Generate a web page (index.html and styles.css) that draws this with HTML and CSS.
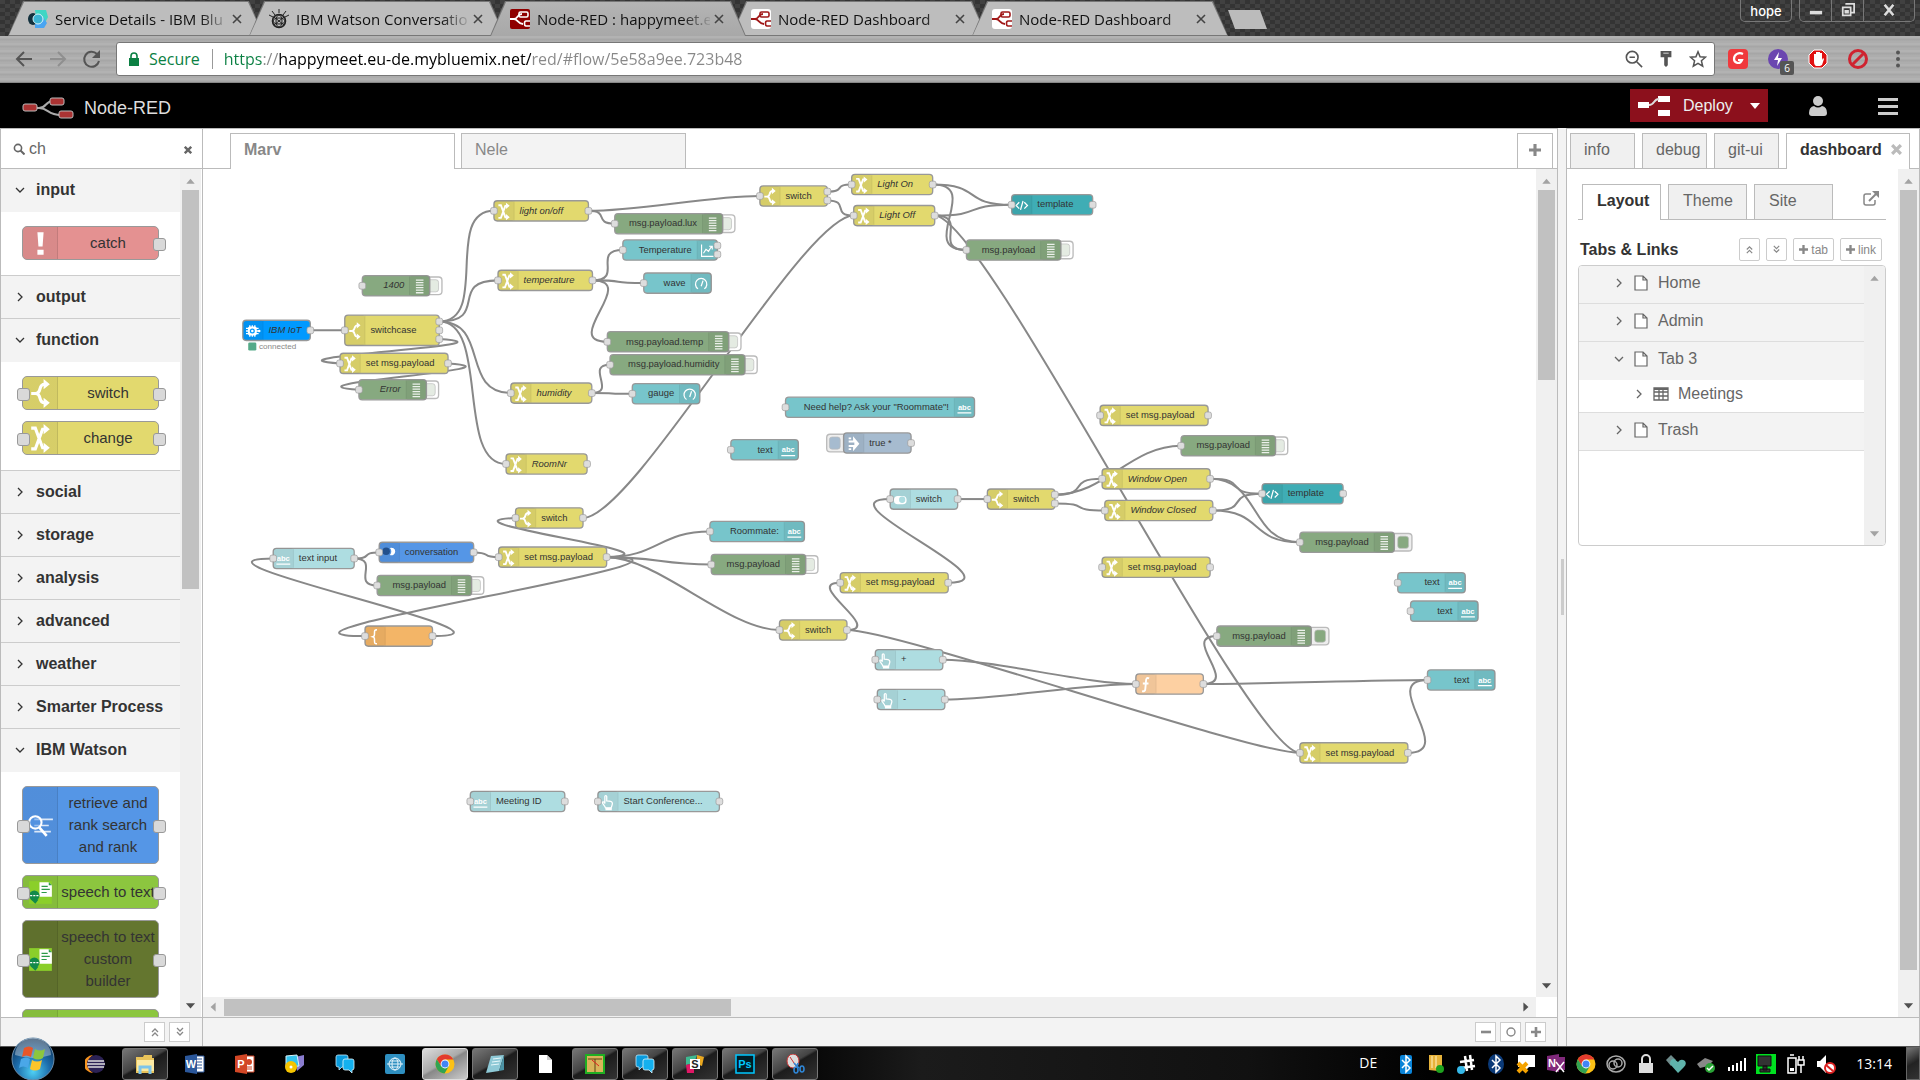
FILE: index.html
```html
<!DOCTYPE html>
<html lang="en">
  <head>
    <meta charset="UTF-8" />
    <meta name="viewport" content="width=device-width, initial-scale=1.0" />
    <title>Node-RED : happymeet.eu-de.mybluemix.net</title>
    <link rel="stylesheet" href="styles.css">
  </head>
  <body>
    <svg class="sprite" aria-hidden="true">
      <!-- node icons -->
      <symbol id="i-switch" viewBox="0 0 30 30">
        <g fill="none" stroke="#fff" stroke-width="3"><path d="M6 15h4c7 0 2-9 9-9M10 15c7 0 2 9 9 9" /></g>
        <path fill="#fff" d="M18 1l6 5-6 5zM18 19l6 5-6 5z" />
      </symbol>
      <symbol id="i-change" viewBox="0 0 30 30">
        <g fill="none" stroke="#fff" stroke-width="3"><path d="M6 5h4l7 19h3M6 25h4l7-19h3" /></g>
        <path fill="#fff" d="M18 1l6 5-6 5zM18 19l6 5-6 5z" />
      </symbol>
      <symbol id="i-debug" viewBox="0 0 30 30">
        <path stroke="#fff" stroke-width="2" opacity=".85" d="M9 5h12M9 9h12M9 13h12M9 17h12M9 21h12M9 25h12" />
      </symbol>
      <symbol id="i-catch" viewBox="0 0 30 30">
        <path fill="#fff" d="M12 4h6l-1 14h-4zM12 21h6v5h-6z" />
      </symbol>
      <symbol id="i-iot" viewBox="0 0 30 30">
        <path stroke="#fff" stroke-width="2" d="M10 6v18M14 6v18M18 6v18M4 11h20M4 15h22M4 19h20" />
        <rect x="7" y="8" width="14" height="14" rx="3" fill="#fff" />
        <circle cx="14" cy="15" r="3" fill="none" stroke="#09f" stroke-width="2" />
        <circle cx="25" cy="15" r="2" fill="#fff" />
      </symbol>
      <symbol id="i-abc" viewBox="0 0 30 30">
        <text x="15" y="18" class="abc">abc</text>
        <path stroke="#fff" stroke-width="2" d="M4 23h22" />
      </symbol>
      <symbol id="i-chart" viewBox="0 0 30 30">
        <path fill="none" stroke="#fff" stroke-width="1.8" d="M6 5v19h19M9 19l4-6 4 3 5-8M18 8h5v5" />
      </symbol>
      <symbol id="i-gauge" viewBox="0 0 30 30">
        <path fill="none" stroke="#fff" stroke-width="2" d="M10 23a9 9 0 1 1 10 0M15 19l3-9" />
      </symbol>
      <symbol id="i-code" viewBox="0 0 30 30">
        <path fill="none" stroke="#fff" stroke-width="2" d="M11 10l-5 5 5 5M19 10l5 5-5 5M17 8l-4 14" />
      </symbol>
      <symbol id="i-toggle" viewBox="0 0 30 30">
        <rect x="5" y="9" width="20" height="13" rx="6" fill="#fff" />
        <circle cx="18" cy="15" r="5" fill="#aedde1" />
      </symbol>
      <symbol id="i-hand" viewBox="0 0 30 30">
        <path fill="none" stroke="#fff" stroke-width="2" d="M11 24c-1-4-5-6-5-9 2-1 3 0 4 2V6c0-2 3-2 3 0v7c5 0 9 1 9 4 0 2-1 4-2 7z" />
        <path fill="#fff" d="M11 24h10v4H11z" />
      </symbol>
      <symbol id="i-inject" viewBox="0 0 30 30">
        <path fill="#fff" d="M14 3l10 12-10 12v-7H7v-3h9v-4H7v-3h7zM7 5h4v3H7zM7 22h4v3H7z" />
      </symbol>
      <symbol id="i-brace" viewBox="0 0 30 30">
        <path fill="none" stroke="#fff" stroke-width="2.4" d="M18 4c-4 0-4 1-4 5s0 5-3 6c3 1 3 2 3 6s0 5 4 5" />
      </symbol>
      <symbol id="i-function" viewBox="0 0 30 30">
        <path fill="none" stroke="#fff" stroke-width="3" d="M20 5c-4-2-5 1-5 5l-1 11c0 4-2 5-5 4M10 13h9" />
      </symbol>
      <symbol id="i-talk" viewBox="0 0 30 30">
        <circle cx="10" cy="12" r="6" fill="#22508d" /><path fill="#fff" d="M16 7a6 6 0 1 1 0 11 8 8 0 0 0 0-11z" />
      </symbol>
      <symbol id="i-search" viewBox="0 0 30 30">
        <path stroke="#fff" stroke-width="1.6" opacity=".8" d="M9 9h18M9 15h14M9 21h16" />
        <circle cx="10" cy="12" r="6" fill="#5596e6" fill-opacity=".5" stroke="#fff" stroke-width="2" />
        <path stroke="#fff" stroke-width="2.6" d="M14 17l7 8" />
      </symbol>
      <symbol id="i-speech" viewBox="0 0 30 30">
        <path fill="#8bcf2a" d="M4 4h22v22H4z" /><path fill="#fff" d="M14 5h9l3 3v11H14z" />
        <path fill="#2b9a48" d="M23 5v3h3z" />
        <path stroke="#2b9a48" stroke-width="1.2" d="M16 9h6M16 12h8M16 15h5" />
        <circle cx="9" cy="18" r="5" fill="#128a4a" /><path fill="#128a4a" d="M6 22h7l-3 4z" />
        <path stroke="#fff" stroke-width="1.4" stroke-dasharray="2 1" d="M5 18h8" />
      </symbol>

      <!-- general icons -->
      <symbol id="i-right" viewBox="0 0 10 10"><path fill="none" stroke="currentColor" stroke-width="1.3" d="M3 1l4 4-4 4" /></symbol>
      <symbol id="i-down" viewBox="0 0 10 10"><path fill="none" stroke="currentColor" stroke-width="1.3" d="M1 3l4 4 4-4" /></symbol>
      <symbol id="i-dup" viewBox="0 0 10 10"><path fill="none" stroke="currentColor" stroke-width="1.3" d="M2 5l3-3 3 3M2 9l3-3 3 3" /></symbol>
      <symbol id="i-ddown" viewBox="0 0 10 10"><path fill="none" stroke="currentColor" stroke-width="1.3" d="M2 1l3 3 3-3M2 5l3 3 3-3" /></symbol>
      <symbol id="i-cross" viewBox="0 0 10 10"><path stroke="currentColor" stroke-width="3" d="M1 1l8 8M9 1l-8 8" /></symbol>
      <symbol id="i-thin" viewBox="0 0 10 10"><path stroke="currentColor" stroke-width="1.6" d="M1 1l8 8M9 1l-8 8" /></symbol>
      <symbol id="i-plus" viewBox="0 0 10 10"><path stroke="currentColor" stroke-width="2.6" d="M5 0v10M0 5h10" /></symbol>
      <symbol id="i-minus" viewBox="0 0 10 10"><path stroke="currentColor" stroke-width="2.6" d="M0 5h10" /></symbol>
      <symbol id="i-ring" viewBox="0 0 10 10"><circle cx="5" cy="5" r="4" fill="none" stroke="currentColor" stroke-width="1.4" /></symbol>
      <symbol id="i-lens" viewBox="0 0 12 12"><circle cx="5" cy="5" r="3.6" fill="none" stroke="currentColor" stroke-width="1.6" /><path stroke="currentColor" stroke-width="2" d="M7.500 7.500l4 4" /></symbol>
      <symbol id="i-page" viewBox="0 0 14 16"><path fill="#fff" stroke="currentColor" stroke-width="1.2" d="M1 1h8l4 4v10H1zM9 1v4h4" /></symbol>
      <symbol id="i-table" viewBox="0 0 16 14"><path fill="none" stroke="currentColor" stroke-width="1.3" d="M1 1h14v12H1zM1 5h14M1 9h14M6 2v11M10 2v11" /><path fill="currentColor" d="M1 1h14v2H1z" /></symbol>
      <symbol id="i-red" viewBox="0 0 20 20">
        <path fill="none" stroke="currentColor" stroke-width="1.8" d="M0 10h4c4 0 3-5 8-5M4 10c4 0 4 5 9 5" />
        <rect x="9" y="3" width="9" height="5" rx="1.500" fill="none" stroke="currentColor" stroke-width="1.6" />
        <path fill="none" stroke="currentColor" stroke-width="1.6" d="M20 12h-4c-2 0-2 5 0 5h4" />
      </symbol>
      <symbol id="i-chrome" viewBox="0 0 20 20">
        <circle cx="10" cy="10" r="9.500" fill="#fbc116" />
        <path fill="#e33b2e" d="M1.800 5.200A9.500 9.500 0 0 1 18.300 5.500H10L6 12z" />
        <path fill="#31a352" d="M1.800 5.200A9.500 9.500 0 0 0 9.500 19.500L14 12l-8 0z" />
        <circle cx="10" cy="10" r="4.400" fill="#fff" /><circle cx="10" cy="10" r="3.500" fill="#4285f4" />
      </symbol>
      <symbol id="i-chat" viewBox="0 0 20 20">
        <path fill="#0a9bdc" stroke="#bfe9fb" stroke-width=".8" d="M1 3q0-2 2-2h8q2 0 2 2v8q0 2-2 2H7l-3 3v-3H3q-2 0-2-2z" />
        <path fill="#14b1ef" stroke="#dff5fd" stroke-width=".8" d="M8 7q0-2 2-2h7q2 0 2 2v7q0 2-2 2v3l-3-3h-4q-2 0-2-2z" />
      </symbol>
      <symbol id="i-bt" viewBox="0 0 20 20"><path fill="none" stroke="#fff" stroke-width="1.5" d="M6 6l8 8-4 4V2l4 4-8 8" /></symbol>
    </svg>

    <div class="tabstrip">
      <div class="btab">
        <svg class="fav" viewBox="0 0 20 20"><path fill="#3fd6c4" d="M7 1h11l2 7-3 6H9z" /><path fill="#4aa5f2" d="M7 19h9l3-5-4-6-8 3z" /><ellipse cx="5" cy="10" rx="5" ry="6" fill="#12303d" /><circle cx="10" cy="10" r="5" fill="#3bb3d2" stroke="#d8f6fa" /></svg>
        <span class="btitle">Service Details - IBM Blu</span>
        <button class="bclose" aria-label="Close tab"><svg><use href="#i-thin" /></svg></button>
      </div>
      <div class="btab">
        <svg class="fav" viewBox="0 0 20 20"><g fill="none" stroke="#222"><path d="M10 0v4M3 2l3 4M17 2l-3 4M0 6l4 2M20 6l-4 2" /><circle cx="10" cy="12" r="6.500" stroke-width="1.6" /><ellipse cx="10" cy="12" rx="6" ry="3" /><ellipse cx="10" cy="12" rx="3" ry="6" /><path d="M5 8l10 8M15 8L5 16" /></g></svg>
        <span class="btitle">IBM Watson Conversatio</span>
        <button class="bclose" aria-label="Close tab"><svg><use href="#i-thin" /></svg></button>
      </div>
      <div class="btab active">
        <svg class="fav solid"><use href="#i-red" /></svg>
        <span class="btitle">Node-RED : happymeet.e</span>
        <button class="bclose" aria-label="Close tab"><svg><use href="#i-thin" /></svg></button>
      </div>
      <div class="btab">
        <svg class="fav light"><use href="#i-red" /></svg>
        <span class="btitle">Node-RED Dashboard</span>
        <button class="bclose" aria-label="Close tab"><svg><use href="#i-thin" /></svg></button>
      </div>
      <div class="btab">
        <svg class="fav light"><use href="#i-red" /></svg>
        <span class="btitle">Node-RED Dashboard</span>
        <button class="bclose" aria-label="Close tab"><svg><use href="#i-thin" /></svg></button>
      </div>
      <button class="newtab" aria-label="New tab"></button>
      <div class="winbar">
        <button class="profile">hope</button>
        <div class="wincontrols">
          <button aria-label="Minimize"><svg viewBox="0 0 16 16"><path fill="#ddd" d="M1 9h14v4H1z" /></svg></button>
          <button aria-label="Restore"><svg viewBox="0 0 16 16"><path fill="none" stroke="#ddd" stroke-width="2" d="M5 1h10v10h-3M2 5h9v9H2zM5 9h3v2H5z" /></svg></button>
          <button class="wide" aria-label="Close"><svg viewBox="0 0 16 16"><path stroke="#ddd" stroke-width="3" d="M3 2l10 12M13 2L3 14" /></svg></button>
        </div>
      </div>
    </div>

    <div class="toolbar">
      <button aria-label="Back"><svg viewBox="0 0 20 20"><path fill="none" stroke="#555" stroke-width="2" d="M18 10H3M10 3l-7 7 7 7" /></svg></button>
      <button aria-label="Forward"><svg viewBox="0 0 20 20"><path fill="none" stroke="#8f8f8f" stroke-width="2" d="M2 10h15M10 3l7 7-7 7" /></svg></button>
      <button aria-label="Reload"><svg viewBox="0 0 20 20"><path fill="none" stroke="#555" stroke-width="2" d="M17 12a7.500 7.500 0 1 1-2-7l2 2" /><path fill="#555" d="M18 1v8h-8z" /></svg></button>
      <div class="omnibox">
        <svg class="lock" viewBox="0 0 10 14"><path fill="#0b8043" d="M0 6h10v8H0z" /><path fill="none" stroke="#0b8043" stroke-width="1.600" d="M2 6V4a3 3 0 0 1 6 0v2" /></svg>
        <span class="secure">Secure</span>
        <input class="url" type="text" aria-label="Address" value="https://happymeet.eu-de.mybluemix.net/red/#flow/5e58a9ee.723b48" />
        <svg class="oi" viewBox="0 0 20 20"><g fill="none" stroke="#555" stroke-width="1.800"><circle cx="8" cy="8" r="6.500" /><path d="M5 8h6M13 13l6 6" /></g></svg>
        <svg class="oi" viewBox="0 0 20 20"><path fill="#555" d="M4 1h12v7h-4v9l-2 2-2-2V8H4zM7 3v1h6V3z" /></svg>
        <svg class="oi" viewBox="0 0 20 20"><path fill="none" stroke="#555" stroke-width="1.700" d="M10 2l2.300 5.500 6 .5-4.500 4 1.400 6-5.200-3.200L4.800 18l1.400-6L1.700 8l6-.5z" /></svg>
      </div>
      <div class="exts">
        <button aria-label="Grammar"><svg viewBox="0 0 20 20"><rect width="20" height="20" rx="4" fill="#f0393d" /><path fill="none" stroke="#fff" stroke-width="2.200" d="M15 5c-4-2-9 0-9 5 0 4 6 6 8 1h-4" /></svg></button>
        <button aria-label="Speed"><svg viewBox="0 0 20 20"><circle cx="10" cy="10" r="10" fill="#6b46b0" /><path fill="#fff" d="M11 3l-5 8h4l-1 6 5-8h-4z" /></svg><span class="badge">6</span></button>
        <button aria-label="Ad blocker"><svg viewBox="0 0 20 20"><path fill="#e01010" stroke="#fff" d="M6 1h8l5 5v8l-5 5H6l-5-5V6z" /><path fill="#fff" d="M6 10V5h2v4-6h2v6-6h2v6-5h2v7l1-2 1 1-2 6-2 1H8c-2-1-2-3-2-6z" /></svg></button>
        <button aria-label="Blocked"><svg viewBox="0 0 20 20"><g fill="none" stroke="#cf2330" stroke-width="3"><circle cx="10" cy="10" r="8.500" /><path d="M16 4L4 16" /></g></svg></button>
        <button aria-label="Menu"><svg viewBox="0 0 20 20"><g fill="#555"><circle cx="10" cy="3.500" r="2" /><circle cx="10" cy="10" r="2" /><circle cx="10" cy="16.500" r="2" /></g></svg></button>
      </div>
    </div>

    <header class="header">
      <svg class="logo" viewBox="0 0 52 22"><g fill="none" stroke="#aaa" stroke-width="2"><path d="M14 11h3c8 0 6-7 14-7M17 11c10 0 8 7 22 7" /></g><g fill="#a33" stroke="#bbb"><rect x="1" y="7" width="14" height="7" rx="2" /><rect x="28" y="1" width="14" height="7" rx="2" /><rect x="37" y="14" width="14" height="7" rx="2" /></g></svg>
      <span class="brand">Node-RED</span>
      <button class="deploy">
        <svg class="deploy-icon" viewBox="0 0 32 20"><path fill="#fff" d="M0 6h11v6H0zM20 0h12v6H20zM20 14h12v6H20z" /><path fill="none" stroke="#ddd" stroke-width="2" d="M11 9c6 0 4-6 10-6" /></svg>
        <span>Deploy</span>
        <svg class="caret" viewBox="0 0 10 6"><path fill="#fff" d="M0 0h10L5 6z" /></svg>
      </button>
      <button class="hbtn" aria-label="User"><svg viewBox="0 0 18 20"><circle cx="9" cy="5" r="5" fill="#ccc" /><path fill="#ccc" d="M5 10q4 3 8 0 5 1 5 7 0 3-3 3H3q-3 0-3-3 0-6 5-7z" /></svg></button>
      <button class="hbtn" aria-label="Menu"><svg viewBox="0 0 20 20"><path fill="#ccc" d="M0 2h20v3H0zM0 9h20v3H0zM0 16h20v3H0z" /></svg></button>
    </header>

    <main class="editor">
      <aside class="palette">
        <div class="search">
          <svg><use href="#i-lens" /></svg>
          <input type="text" aria-label="filter nodes" value="ch" />
          <button aria-label="Clear"><svg><use href="#i-cross" /></svg></button>
        </div>
        <div class="palette-main">
          <div class="palette-list">
            <button class="cat open"><svg><use href="#i-down" /></svg>input</button>
            <div class="nodes">
              <div class="pnode catch out"><svg><use href="#i-catch" /></svg><span>catch</span></div>
            </div>
            <button class="cat"><svg><use href="#i-right" /></svg>output</button>
            <button class="cat open"><svg><use href="#i-down" /></svg>function</button>
            <div class="nodes">
              <div class="pnode yellow in out"><svg><use href="#i-switch" /></svg><span>switch</span></div>
              <div class="pnode yellow in out"><svg><use href="#i-change" /></svg><span>change</span></div>
            </div>
            <button class="cat"><svg><use href="#i-right" /></svg>social</button>
            <button class="cat"><svg><use href="#i-right" /></svg>storage</button>
            <button class="cat"><svg><use href="#i-right" /></svg>analysis</button>
            <button class="cat"><svg><use href="#i-right" /></svg>advanced</button>
            <button class="cat"><svg><use href="#i-right" /></svg>weather</button>
            <button class="cat"><svg><use href="#i-right" /></svg>Smarter Process</button>
            <button class="cat open"><svg><use href="#i-down" /></svg>IBM Watson</button>
            <div class="nodes">
              <div class="pnode blue in out"><svg><use href="#i-search" /></svg><span>retrieve and <br />rank search <br />and rank</span></div>
              <div class="pnode green in out"><svg><use href="#i-speech" /></svg><span>speech to text</span></div>
              <div class="pnode olive in out"><svg><use href="#i-speech" /></svg><span>speech to text <br />custom <br />builder</span></div>
              <div class="pnode green"></div>
            </div>
          </div>
          <div class="vscroll palette-scroll"><i class="up"></i><b></b><s></s><i class="dn dark"></i></div>
        </div>
        <div class="footer">
          <button aria-label="Collapse all"><svg><use href="#i-dup" /></svg></button>
          <button aria-label="Expand all"><svg><use href="#i-ddown" /></svg></button>
        </div>
      </aside>

      <section class="workspace">
        <nav class="wtabs">
          <a class="wtab active" href="#marv">Marv</a>
          <a class="wtab" href="#nele">Nele</a>
          <button class="add" aria-label="Add flow"><svg><use href="#i-plus" /></svg></button>
        </nav>
        <div class="chart">
          <div class="canvas"><svg id="flow"></svg></div>
          <div class="vscroll chart-scroll"><i class="up"></i><b></b><s></s><i class="dn dark"></i></div>
          <div class="hscroll"><i class="lt"></i><b></b><s></s><i class="rt dark"></i></div>
        </div>
        <div class="footer zoom">
          <button aria-label="Zoom out"><svg><use href="#i-minus" /></svg></button>
          <button aria-label="Reset zoom"><svg><use href="#i-ring" /></svg></button>
          <button aria-label="Zoom in"><svg><use href="#i-plus" /></svg></button>
        </div>
      </section>

      <div class="separator"></div>

      <aside class="sidebar">
        <nav class="stabs">
          <a class="stab" href="#info">info</a>
          <a class="stab" href="#debug">debug</a>
          <a class="stab" href="#git">git-ui</a>
          <a class="stab active" href="#dashboard">dashboard <svg><use href="#i-cross" /></svg></a>
        </nav>
        <div class="side-main">
          <div class="dash">
            <nav class="dtabs">
              <a class="dtab active" href="#layout">Layout</a>
              <a class="dtab" href="#theme">Theme</a>
              <a class="dtab" href="#site">Site</a>
              <a class="ext" href="#ui" aria-label="Open dashboard"><svg viewBox="0 0 16 16"><path fill="none" stroke="#888" stroke-width="1.500" d="M8 3H3Q1 3 1 5v7q0 2 2 2h7q2 0 2-2V9" /><path fill="none" stroke="#888" stroke-width="2" d="M6 10l8-8" /><path fill="#888" d="M9 0h7v7z" /></svg></a>
            </nav>
            <div class="tools">
              <strong>Tabs &amp; Links</strong>
              <button aria-label="Collapse all"><svg><use href="#i-dup" /></svg></button>
              <button aria-label="Expand all"><svg><use href="#i-ddown" /></svg></button>
              <button><svg><use href="#i-plus" /></svg>tab</button>
              <button><svg><use href="#i-plus" /></svg>link</button>
            </div>
            <div class="tree">
              <ul>
                <li><svg class="chev"><use href="#i-right" /></svg><svg class="ico"><use href="#i-page" /></svg>Home</li>
                <li><svg class="chev"><use href="#i-right" /></svg><svg class="ico"><use href="#i-page" /></svg>Admin</li>
                <li class="open"><svg class="chev"><use href="#i-down" /></svg><svg class="ico"><use href="#i-page" /></svg>Tab 3</li>
                <li class="child"><svg class="chev"><use href="#i-right" /></svg><svg class="ico"><use href="#i-table" /></svg>Meetings</li>
                <li><svg class="chev"><use href="#i-right" /></svg><svg class="ico"><use href="#i-page" /></svg>Trash</li>
              </ul>
              <div class="vscroll"><i class="up"></i><s></s><i class="dn"></i></div>
            </div>
          </div>
          <div class="vscroll side-scroll"><i class="up"></i><b></b><s></s><i class="dn dark"></i></div>
        </div>
        <div class="footer"></div>
      </aside>
    </main>

    <footer class="taskbar">
      <button class="orb" aria-label="Start">
        <svg viewBox="0 0 44 44">
          <defs><radialGradient id="orb" cx=".5" cy=".8" r=".8"><stop offset="0" stop-color="#4fd0f5" /><stop offset=".5" stop-color="#1c6cab" /><stop offset="1" stop-color="#0b2c50" /></radialGradient></defs>
          <circle cx="22" cy="22" r="21" fill="url(#orb)" stroke="#6b8fae" /><path fill="#fff" opacity=".35" d="M4 18a18 17 0 0 1 36 0q-18 6-36 0z" />
          <path fill="#e8562a" d="M13 11q5-3 9 0l-2 9q-5-3-9 0z" /><path fill="#8cc63e" d="M24 12q5 3 10 0l-2 9q-5 3-10 0z" />
          <path fill="#4aa7e8" d="M10 22q5-3 9 0l-2 9q-5-3-9 0z" /><path fill="#fbc52c" d="M21 23q5 3 10 0l-2 9q-5 3-10 0z" />
        </svg>
      </button>
      <div class="tasks">
        <button aria-label="Eclipse"><svg viewBox="0 0 20 20"><path fill="#f7941e" d="M8 1a9 9 0 0 0 0 18 11 11 0 0 1 0-18z" /><circle cx="11" cy="10" r="9" fill="#2c2255" /><path stroke="#ddd" stroke-width="1.500" d="M3 7h16M2 10h18M3 13h16" /></svg></button>
        <button class="run" aria-label="Explorer"><svg viewBox="0 0 20 20"><path fill="#e8c35a" d="M1 3h7l1-2h8v3h2v15H1z" /><path fill="#fbeaa4" d="M2 6h17v11H2z" /><path fill="none" stroke="#7cc4ea" stroke-width="3" d="M5 20v-7h10v7" /></svg></button>
        <button aria-label="Word"><svg viewBox="0 0 20 20"><path fill="#fff" stroke="#2b579a" d="M10 2h9v16h-9z" /><path stroke="#2b579a" d="M12 5h5M12 8h5M12 11h5M12 14h5" /><path fill="#2b579a" d="M0 2l12-2v20L0 18z" /><text class="glyph" x="6" y="14">W</text></svg></button>
        <button aria-label="PowerPoint"><svg viewBox="0 0 20 20"><path fill="#fff" stroke="#d24726" d="M10 2h9v16h-9z" /><path stroke="#d24726" d="M12 13h5M12 15h5" /><circle cx="14" cy="8" r="3" fill="#d24726" /><path fill="#d24726" d="M0 2l12-2v20L0 18z" /><text class="glyph" x="6" y="14">P</text></svg></button>
        <button aria-label="Installer"><svg viewBox="0 0 20 20"><path fill="#8a7ccf" d="M10 3l9-2v10l-7 6z" /><path fill="#35c3ee" stroke="#d7f3fb" d="M1 2l11-1 2 11-13 1z" /><circle cx="6" cy="13" r="6" fill="#f5c400" /><circle cx="6" cy="13" r="1.500" fill="#fff" /></svg></button>
        <button aria-label="Chat"><svg><use href="#i-chat" /></svg></button>
        <button aria-label="Network"><svg viewBox="0 0 20 20"><rect width="20" height="20" rx="2" fill="#2e8fc0" /><g fill="none" stroke="#e4f4fb"><circle cx="10" cy="10" r="6" /><ellipse cx="10" cy="10" rx="3" ry="6" /><path d="M2 10h16M5 7h10M5 13h10" /></g></svg></button>
        <button class="run focus" aria-label="Chrome"><svg><use href="#i-chrome" /></svg></button>
        <button class="run" aria-label="Notepad"><svg viewBox="0 0 20 20"><path fill="#8ec9d6" d="M6 2l13-1-5 16-13 2z" /><path fill="#4c93a5" d="M14 17l5-16v15z" /><path stroke="#e8f8fb" d="M8 5l8-1M7 8l8-1M6 11l8-1" /></svg></button>
        <button aria-label="Document"><svg viewBox="0 0 20 20"><path fill="#fff" d="M4 1h8l5 5v13H4z" /><path fill="#ccc" d="M12 1v5h5z" /></svg></button>
        <button class="run" aria-label="Board"><svg viewBox="0 0 20 20"><path fill="#d8b35a" stroke="#1fae22" stroke-width="2" d="M1 1h18v18H1z" /><path stroke="#5b4312" d="M3 5h14M10 5v13" /><path stroke="#e02020" d="M7 6l7 6" /></svg></button>
        <button class="run" aria-label="Messages"><svg><use href="#i-chat" /></svg></button>
        <button class="run" aria-label="Slack"><svg viewBox="0 0 20 20"><path fill="#3eb991" d="M1 3l11-2-3 8-8 2z" /><path fill="#e9a820" d="M12 1l7 2-2 9-5-2z" /><path fill="#e01765" d="M1 11l8-2v10H2z" /><path fill="#fff" d="M5 5h10v10H5z" /><text class="glyph dark" x="10" y="14">S</text></svg></button>
        <button class="run" aria-label="Photoshop"><svg viewBox="0 0 20 20"><path fill="#001d26" stroke="#00c8ff" stroke-width="1.500" d="M1 1h18v18H1z" /><text class="glyph ps" x="10" y="14">Ps</text></svg></button>
        <button class="run" aria-label="Snipping tool"><svg viewBox="0 0 20 20"><ellipse cx="8" cy="7" rx="6" ry="7" fill="#ddd" stroke="#c33" stroke-width="1" /><path stroke="#c33" d="M5 3l6 9" /><g fill="none" stroke="#2f86d6" stroke-width="1.600"><path d="M9 9l5 5M13 9l-1 4" /><ellipse cx="11" cy="16" rx="2" ry="3" /><ellipse cx="17" cy="15" rx="2" ry="3" /></g></svg></button>
      </div>
      <span class="lang">DE</span>
      <div class="tray">
        <svg viewBox="0 0 20 20"><rect x="4" y="1" width="12" height="19" rx="2" fill="#0a84d8" /><use href="#i-bt" /></svg>
        <svg viewBox="0 0 20 20"><path fill="#e6b23a" d="M3 1h13v12l-4 4-9-1z" /><path stroke="#fff3c4" d="M6 2v12M10 2v12" /><circle cx="14" cy="15" r="4" fill="#1ea21e" /></svg>
        <svg viewBox="0 0 20 20"><path stroke="#fff" stroke-width="2.500" d="M9 2l2 15M14 1l2 15M4 8l14-2M5 14l14-2" /><circle cx="5" cy="16" r="4" fill="#35b8e8" /></svg>
        <svg viewBox="0 0 20 20"><ellipse cx="10" cy="10" rx="8" ry="10" fill="#0b3a78" /><use href="#i-bt" /></svg>
        <svg viewBox="0 0 20 20"><path fill="#fff" d="M2 1h17v12h-6l-4 4V13H2z" /><path stroke="#f5a300" stroke-width="4" d="M2 9l9 9M11 9l-9 9" /></svg>
        <svg viewBox="0 0 20 20"><path fill="#80297b" d="M1 2l12-2v18L1 16zM13 3h6v13h-6z" /><text class="glyph" x="6" y="13">N</text><path stroke="#fff" stroke-width="1.500" d="M10 8l8 10M18 8l-8 10" /></svg>
        <svg viewBox="0 0 20 20"><use href="#i-chrome" /></svg>
        <svg viewBox="0 0 20 20"><g fill="none" stroke="#aaa" stroke-width="1.500"><ellipse cx="10" cy="10" rx="9" ry="8" /><circle cx="7" cy="11" r="4" /><circle cx="12" cy="9" r="4" /></g></svg>
        <svg viewBox="0 0 20 20"><path fill="#ddd" d="M3 9h14v10H3z" /><path fill="none" stroke="#ddd" stroke-width="2" d="M6 9V5a4 4 0 0 1 8 0v4" /></svg>
        <svg viewBox="0 0 20 20"><path fill="#6f8b8b" d="M0 6l5-5 5 5-5 6z" /><path fill="#5fb3ab" d="M12 19L4 10q0-5 4-5l4 3q3-4 7-1 2 3-1 6z" /></svg>
        <svg viewBox="0 0 20 20"><path fill="#888" d="M1 10l8-6 8 3-5 5-8 2z" /><circle cx="14" cy="14" r="5" fill="#2aa336" /><path fill="none" stroke="#fff" stroke-width="1.500" d="M11 14l2 2 4-4" /></svg>
        <svg viewBox="0 0 20 20"><path stroke="#fff" stroke-width="2" d="M3 17v-4M7 17v-6M11 17V9M15 17V7M19 17V4" /></svg>
        <svg viewBox="0 0 20 20"><path fill="#00e020" d="M0 0h20v20H0z" /><path fill="#333" stroke="#111" d="M2 2h13v10H2zM7 12h4v4H7zM4 15h10v3H4z" /></svg>
        <svg viewBox="0 0 20 20"><path fill="none" stroke="#fff" stroke-width="1.500" d="M2 4h8v15H2zM4 1h4M13 2v4M17 2v4M12 6h6v5h-6zM15 11v8" /><path fill="#fff" d="M4 14h4v3H4z" /></svg>
        <svg viewBox="0 0 20 20"><path fill="#fff" d="M1 7h3l6-6v18l-6-6H1z" /><circle cx="14" cy="14" r="5" fill="#fff" stroke="#d22" stroke-width="2" /><path stroke="#d22" stroke-width="2" d="M10 11l7 6" /></svg>
      </div>
      <time class="clock">13:14</time>
      <button class="desktop" aria-label="Show desktop"></button>
    </footer>
    <script src="script.js"></script>
  </body>
</html>
```
FILE: styles.css
```css
* {
  box-sizing: border-box;
  margin: 0;
  padding: 0;
}

body {
  font-family: "Liberation Sans", Arial, Helvetica, sans-serif;
  font-size: 16px;
  color: #666;
  background-color: #fff;
  display: flex;
  flex-direction: column;
  height: 100vh;
  overflow: hidden;
}

button,
input {
  font: inherit;
  color: inherit;
  background: none;
  border: none;
  outline: none;
}

a {
  color: inherit;
  text-decoration: none;
}

.sprite {
  display: none;
}

/* browser tabs */
.tabstrip {
  display: flex;
  align-items: flex-end;
  height: 36px;
  padding-left: 8px;
  background: repeating-conic-gradient(#343434 0 25%, #414141 0 50%) 0 0 / 10px 8px;
  font-family: "Open Sans", "Noto Sans", sans-serif;
}

.btab {
  position: relative;
  z-index: 0;
  display: flex;
  align-items: center;
  width: 256px;
  height: 35px;
  margin-right: -15px;
  padding: 0 19px 0 20px;
  color: #111;
  background-color: #777;
  clip-path: polygon(15px 0, calc(100% - 15px) 0, 100% 100%, 0 100%);
}

.btab::before {
  content: "";
  position: absolute;
  inset: 1px;
  z-index: -1;
  background-color: #bdbdbd;
  clip-path: polygon(15px 0, calc(100% - 15px) 0, 100% 100%, 0 100%);
}

.btab.active {
  z-index: 1;
}

.btab.active::before {
  bottom: 0;
  background: linear-gradient(#b4b4b4, #a8a8a8);
}

.fav {
  width: 20px;
  height: 20px;
  flex: none;
}

.fav.solid {
  background-color: #8f0000;
  color: #fff;
  border-radius: 2px;
}

.fav.light {
  background-color: #fff;
  color: #a01818;
  border-radius: 3px;
}

.btitle {
  flex: 1;
  min-width: 0;
  margin: 0 4px 0 7px;
  font-size: 15px;
  white-space: nowrap;
  mask-image: linear-gradient(90deg, #000 145px, transparent 176px);
}

.bclose {
  flex: none;
  width: 10px;
  height: 10px;
  margin-right: 3px;
  color: #444;
  display: flex;
}

.bclose svg {
  width: 10px;
  height: 10px;
}

.newtab {
  width: 39px;
  height: 19px;
  margin: 0 0 7px 15px;
  background-color: #bbb;
  clip-path: polygon(0 0, 82% 0, 100% 100%, 18% 100%);
}

.winbar {
  display: flex;
  align-self: flex-start;
  gap: 7px;
  margin-left: auto;
  padding-right: 5px;
  color: #fff;
}

.profile,
.wincontrols {
  height: 22px;
  border: 1px solid #777;
  border-top: none;
  border-radius: 0 0 5px 5px;
}

.profile {
  width: 52px;
  font-family: Inter, "Liberation Sans", sans-serif;
  font-size: 13px;
  font-weight: 500;
}

.wincontrols {
  display: flex;
}

.wincontrols button {
  width: 32px;
  border-right: 1px solid #777;
}

.wincontrols .wide {
  width: 50px;
  border-right: none;
}

.wincontrols svg {
  width: 14px;
  height: 14px;
}

/* browser toolbar */
.toolbar {
  display: flex;
  align-items: center;
  height: 47px;
  padding: 0 12px 0 14px;
  background: repeating-linear-gradient(#b2b2b2 0 2px, #a6a6a6 3px 4px, #adadad 5px 7px);
  border-bottom: 1px solid #888;
  font-family: "Open Sans", "Noto Sans", sans-serif;
}

.toolbar > button {
  width: 34px;
  height: 20px;
  text-align: left;
}

.toolbar button svg {
  width: 20px;
  height: 20px;
  display: block;
}

.omnibox {
  flex: 1;
  display: flex;
  align-items: center;
  height: 34px;
  margin-right: 13px;
  padding: 0 7px 0 12px;
  background-color: #fff;
  border: 1px solid #777;
  border-radius: 3px;
}

.lock {
  width: 10px;
  height: 14px;
}

.secure {
  margin: 0 11px 0 10px;
  padding-right: 12px;
  border-right: 1px solid #999;
  color: #0b8043;
  line-height: 20px;
}

/* scheme green, host black, the rest grey */
.url {
  flex: 1;
  height: 24px;
  color: transparent;
  background: linear-gradient(90deg, #0b8043 39px, #888 39px 55px, #000 55px 307px, #888 307px);
  background-clip: text;
}

.oi {
  width: 18px;
  height: 18px;
  margin-left: 14px;
}

.exts {
  display: flex;
  gap: 20px;
}

.exts button {
  position: relative;
  width: 20px;
  height: 20px;
}

.badge {
  position: absolute;
  left: 12px;
  top: 12px;
  width: 14px;
  height: 14px;
  background-color: #555;
  border-radius: 2px;
  color: #fff;
  font-size: 10px;
  line-height: 14px;
}

/* editor header */
.header {
  display: flex;
  align-items: center;
  height: 45px;
  padding: 0 22px;
  background-color: #000;
}

.logo {
  width: 52px;
  height: 22px;
  margin-top: 5px;
}

.brand {
  margin: 5px 0 0 10px;
  color: #ddd;
  font-size: 18px;
}

.deploy {
  display: flex;
  align-items: center;
  width: 138px;
  height: 33px;
  margin-left: auto;
  padding: 0 8px;
  color: #eee;
  background-color: #8c101c;
}

.deploy-icon {
  width: 32px;
  height: 20px;
  margin-right: 13px;
}

.caret {
  width: 10px;
  height: 6px;
  margin-left: auto;
}

.hbtn {
  width: 20px;
  height: 20px;
  margin-left: 40px;
}

.hbtn + .hbtn {
  margin-left: 50px;
}

.hbtn svg {
  width: 20px;
  height: 20px;
}

/* editor columns */
.editor {
  flex: 1;
  display: flex;
  min-height: 0;
  background-color: #f3f3f3;
}

.palette,
.workspace,
.sidebar {
  display: flex;
  flex-direction: column;
  border: 1px solid #bbb;
  border-bottom: none;
  background-color: #fff;
}

.footer {
  display: flex;
  align-items: flex-start;
  justify-content: flex-end;
  gap: 4px;
  height: 29px;
  padding: 4px 12px 0;
  background-color: #f3f3f3;
  border-top: 1px solid #bbb;
}

.footer button {
  display: flex;
  align-items: center;
  justify-content: center;
  width: 21px;
  height: 20px;
  color: #888;
  background-color: #fff;
  border: 1px solid #ccc;
}

.footer svg {
  width: 10px;
  height: 10px;
}

/* scrollbars */
.vscroll {
  display: flex;
  flex-direction: column;
  align-items: center;
  width: 21px;
  background-color: #f0f0f0;
}

.hscroll {
  grid-column: 1;
  display: flex;
  align-items: center;
  height: 20px;
  background-color: #f0f0f0;
}

.vscroll i,
.hscroll i {
  flex: none;
  width: 21px;
  height: 21px;
  background-color: #a3a3a3;
}

.vscroll i.dark,
.hscroll i.dark {
  background-color: #505050;
}

.up {
  clip-path: polygon(30% 70%, 50% 47%, 70% 70%);
}

.dn {
  clip-path: polygon(28% 35%, 72% 35%, 50% 60%);
}

.lt {
  clip-path: polygon(60% 28%, 60% 72%, 36% 50%);
}

.rt {
  clip-path: polygon(40% 28%, 40% 72%, 64% 50%);
}

.vscroll b,
.hscroll b {
  background-color: #c1c1c1;
}

.vscroll b {
  width: 17px;
}

.hscroll b {
  height: 17px;
}

.vscroll s {
  flex: 1;
}

.palette-scroll b {
  flex: 0 0 47%;
}

.chart-scroll b {
  flex: 0 0 23%;
}

.side-scroll b {
  flex: 0 0 92%;
}

.hscroll b {
  flex: 0 0 38%;
}

.hscroll s {
  flex: 1;
}

/* palette */
.palette {
  width: 203px;
}

.search {
  display: flex;
  align-items: center;
  height: 40px;
  padding: 0 10px 0 12px;
  border-bottom: 1px solid #bbb;
}

.search > svg {
  width: 12px;
  height: 12px;
  margin-right: 4px;
}

.search input {
  flex: 1;
  width: 100px;
}

.search button svg {
  width: 8px;
  height: 8px;
}

.palette-main {
  flex: 1;
  display: flex;
  min-height: 0;
  padding-right: 1px;
}

.palette-list {
  flex: 1;
  overflow: hidden;
}

.cat {
  display: flex;
  align-items: center;
  width: 100%;
  height: 43px;
  padding-left: 14px;
  background-color: #f3f3f3;
  border-bottom: 1px solid #ccc;
  color: #333;
  font-weight: bold;
}

.cat.open {
  border-bottom-color: #f3f3f3;
}

.cat svg {
  width: 10px;
  height: 10px;
  margin-right: 11px;
}

.nodes {
  display: flex;
  flex-direction: column;
  gap: 11px;
  padding: 14px 20px 15px 21px;
  border-bottom: 1px solid #ccc;
}

.pnode {
  position: relative;
  display: flex;
  align-items: center;
  width: 137px;
  min-height: 34px;
  border: 1px solid #999;
  border-radius: 5px;
  color: #333;
  font-size: 15px;
  line-height: 22px;
  text-align: center;
  background-image: linear-gradient(90deg, rgba(0, 0, 0, 0.05) 34px, rgba(0, 0, 0, 0.15) 34px 35px, transparent 35px);
}

.pnode svg {
  flex: none;
  width: 31px;
  height: 31px;
  margin: 0 2px;
}

.pnode span {
  flex: 1;
  padding: 5px 0;
  white-space: nowrap;
}

/* ports hang over the node's edges */
.pnode.in::before,
.pnode.out::after {
  content: "";
  position: absolute;
  top: calc(50% - 5px);
  width: 11px;
  height: 11px;
  background-color: #d9d9d9;
  border: 1px solid #999;
  border-radius: 3px;
}

.pnode.in::before {
  left: -6px;
}

.pnode.out::after {
  right: -8px;
}

.catch {
  background-color: #e49191;
}

.yellow {
  background-color: #e2d96e;
}

.blue {
  background-color: #5596e6;
}

.green {
  background-color: #8cc63f;
}

.olive {
  background-color: #64762f;
}

/* workspace */
.workspace {
  flex: 1;
  min-width: 0;
  border-left: none;
}

.wtabs {
  display: flex;
  align-items: flex-end;
  height: 40px;
  padding: 0 4px 0 27px;
  border-bottom: 1px solid #bbb;
}

.wtab {
  width: 225px;
  height: 35px;
  margin-right: 6px;
  padding: 0 13px;
  line-height: 32px;
  border: 1px solid #bbb;
  border-bottom: none;
  color: #888;
  background-color: #f3f3f3;
}

.active.wtab {
  height: 36px;
  margin-bottom: -1px;
  background-color: #fff;
  font-weight: bold;
}

.add {
  width: 36px;
  height: 35px;
  margin-left: auto;
  border: 1px solid #bbb;
  border-bottom: none;
  color: #888;
}

.add svg {
  width: 12px;
  height: 12px;
}

.chart {
  flex: 1;
  display: grid;
  grid-template-columns: 1fr 21px;
  grid-template-rows: 1fr 20px;
  min-height: 0;
}

.canvas {
  overflow: hidden;
}

.canvas svg {
  display: block;
  width: 100%;
  height: 100%;
}

.link {
  fill: none;
  stroke: #888;
  stroke-width: 3;
}

.body {
  stroke: #999;
  stroke-width: 2;
}

.shade {
  fill: #000;
  fill-opacity: 0.05;
}

.edge {
  stroke: #000;
  stroke-opacity: 0.1;
}

.port {
  fill: #ddd;
  stroke: #999;
}

.frame {
  stroke: #bbb;
  stroke-width: 2;
}

.knob {
  stroke: #bbb;
}

.label {
  fill: #333;
  font-size: 14px;
}

.label.italic {
  font-style: italic;
}

.status {
  fill: #888;
  font-size: 12px;
}

.abc {
  fill: #fff;
  font-size: 12px;
  font-weight: bold;
  text-anchor: middle;
}

.zoom {
  padding-right: 11px;
}

.separator {
  display: flex;
  align-items: center;
  width: 8px;
}

.separator::after {
  content: "";
  width: 3px;
  height: 56px;
  margin: 0 auto;
  background-color: #ccc;
}

/* sidebar */
.sidebar {
  width: 354px;
}

.stabs,
.dtabs {
  display: flex;
  align-items: flex-end;
  border-bottom: 1px solid #bbb;
}

.stabs {
  height: 40px;
  gap: 7px;
  padding: 0 9px 0 3px;
}

.stab,
.dtab {
  height: 35px;
  padding: 0 14px;
  line-height: 32px;
  border: 1px solid #bbb;
  border-bottom: none;
  background-color: #f0f0f0;
  white-space: nowrap;
}

.stab {
  width: 65px;
  padding: 0 0 0 13px;
}

.active.stab,
.active.dtab {
  height: 36px;
  margin-bottom: -1px;
  background-color: #fff;
  color: #333;
  font-weight: bold;
}

.active.stab {
  width: auto;
  flex: 1;
}

.stab svg {
  width: 11px;
  height: 11px;
  margin-left: 5px;
  color: #bbb;
}

.side-main {
  flex: 1;
  display: flex;
  min-height: 0;
}

.dash {
  flex: 1;
  padding: 15px 12px 0 11px;
}

.dtabs {
  gap: 7px;
  padding-left: 4px;
}

.dtab {
  width: 79px;
}

.ext {
  margin: 0 7px 12px auto;
}

.ext svg {
  width: 16px;
  height: 16px;
  display: block;
}

.tools {
  display: flex;
  align-items: center;
  gap: 6px;
  margin: 18px 4px 4px 2px;
  color: #333;
}

.tools strong {
  flex: 1;
}

.tools button {
  display: flex;
  align-items: center;
  gap: 3px;
  height: 23px;
  padding: 0 5px;
  border: 1px solid #ccc;
  border-radius: 2px;
  color: #888;
  font-size: 12px;
}

.tools svg {
  width: 9px;
  height: 9px;
}

.tree {
  display: flex;
  height: 281px;
  border: 1px solid #ccc;
  border-radius: 4px;
  overflow: hidden;
}

.tree ul {
  flex: 1;
  list-style: none;
}

.tree li {
  display: flex;
  align-items: center;
  height: 38px;
  padding: 0 0 4px 35px;
  background-color: #f3f3f3;
  border-bottom: 1px solid #ddd;
}

.tree .open {
  border-bottom-color: #f3f3f3;
}

.tree .child {
  height: 33px;
  padding-left: 55px;
  background-color: #fff;
}

.chev {
  width: 10px;
  height: 10px;
  margin-right: 9px;
}

.ico {
  width: 16px;
  height: 16px;
  margin-right: 9px;
}

/* taskbar */
.taskbar {
  display: flex;
  align-items: center;
  height: 34px;
  padding-left: 11px;
  background: linear-gradient(90deg, #000 40%, #1b1b1b 48%, #111 65%, #000 75%);
  border-top: 1px solid #555;
  color: #fff;
  font-family: "Open Sans", "Noto Sans", sans-serif;
}

.orb {
  position: relative;
  width: 44px;
  height: 44px;
  margin: -10px 17px 0 0;
}

.orb svg {
  width: 44px;
  height: 44px;
}

.tasks {
  display: flex;
  gap: 4px;
}

.tasks button {
  display: flex;
  align-items: center;
  justify-content: center;
  width: 46px;
  height: 32px;
  border: 1px solid transparent;
  border-radius: 3px;
}

.tasks .run {
  border-color: #777;
  background: linear-gradient(150deg, #777 0, #444 45%, #1c1c1c 50%, #333 100%);
}

.tasks .focus {
  border-color: #ddd;
  background: linear-gradient(150deg, #ddd 0, #aaa 45%, #888 50%, #ccc 100%);
}

.tasks svg {
  width: 20px;
  height: 20px;
}

.glyph {
  fill: #fff;
  font-family: "Liberation Sans", Arial, sans-serif;
  font-size: 11px;
  font-weight: bold;
  text-anchor: middle;
}

.glyph.dark {
  fill: #222;
}

.glyph.ps {
  fill: #00c8ff;
}

.lang {
  margin: 0 14px 2px auto;
  font-size: 14px;
}

.tray {
  display: flex;
}

.tray > svg {
  width: 20px;
  height: 20px;
  margin: 0 5px;
}

.clock {
  margin: 0 14px 0 15px;
  font-size: 14px;
}

.desktop {
  width: 14px;
  height: 33px;
  background: linear-gradient(150deg, #777, #222 50%, #333);
  border: 1px solid #666;
}
```
FILE: script.js
```js
const ZOOM = 0.675;
const NODE_W = 100;
const NODE_H = 30;

const TYPES = {
  debug: { color: "#87a980", icon: "debug", right: true, in: true, out: 0 },
  change: { color: "#e2d96e", icon: "change", in: true, out: 1 },
  switch: { color: "#e2d96e", icon: "switch", in: true, out: 1 },
  iot: { color: "#0099ff", icon: "iot", out: 1 },
  watson: { color: "#5596e6", icon: "talk", in: true, out: 1 },
  inject: { color: "#a6bbcf", icon: "inject", out: 1 },
  template: { color: "#f3b567", icon: "brace", in: true, out: 1 },
  func: { color: "#fdd0a2", icon: "function", in: true, out: 1 },
  uiTemplate: { color: "#3fadb5", icon: "code", in: true, out: 1 },
  uiText: { color: "#77c5cb", icon: "abc", right: true, in: true, out: 0 },
  uiChart: { color: "#77c5cb", icon: "chart", right: true, in: true, out: 2 },
  uiGauge: { color: "#77c5cb", icon: "gauge", right: true, in: true, out: 0 },
  uiInput: { color: "#aedde1", icon: "abc", in: true, out: 1 },
  uiSwitch: { color: "#aedde1", icon: "toggle", in: true, out: 1 },
  uiButton: { color: "#aedde1", icon: "hand", in: true, out: 1 },
};

// id: [type, left, middle, width, label, options]
const nodes = {
  d1400: ["debug", 236, 173, 100, "1400", { italic: true }],
  iot: ["iot", 59, 239, 100, "IBM IoT", { italic: true, status: "connected" }],
  cases: ["switch", 210, 239, 140, "switchcase", { out: 3 }],
  setErr: ["change", 203, 288, 160, "set msg.payload"],
  error: ["debug", 231, 327, 100, "Error", { italic: true }],
  light: ["change", 431, 62, 140, "light on/off", { italic: true }],
  lux: ["debug", 610, 81, 160, "msg.payload.lux"],
  chart: ["uiChart", 622, 120, 140, "Temperature"],
  temperature: ["change", 437, 165, 140, "temperature", { italic: true }],
  wave: ["uiGauge", 653, 169, 100, "wave"],
  temp: ["debug", 599, 256, 180, "msg.payload.temp"],
  humDebug: ["debug", 603, 290, 200, "msg.payload.humidity"],
  humidity: ["change", 456, 332, 120, "humidity", { italic: true }],
  gauge: ["uiGauge", 636, 333, 100, "gauge"],
  room: ["change", 449, 437, 120, "RoomNr", { italic: true }],
  lightSwitch: ["switch", 825, 40, 100, "switch", { out: 2 }],
  lightOn: ["change", 961, 23, 120, "Light On", { italic: true }],
  lightOff: ["change", 964, 69, 120, "Light Off", { italic: true }],
  lightTpl: ["uiTemplate", 1198, 53, 120, "template"],
  lightDebug: ["debug", 1131, 120, 140, "msg.payload"],
  help: ["uiText", 863, 353, 280, 'Need help? Ask your "Roommate"!'],
  text1: ["uiText", 782, 416, 100, "text"],
  inject: ["inject", 949, 406, 100, "true *"],
  uiSwitch: ["uiSwitch", 1018, 489, 100, "switch"],
  winSwitch: ["switch", 1162, 489, 100, "switch", { out: 2 }],
  set1: ["change", 1329, 365, 160, "set msg.payload"],
  winDebug: ["debug", 1449, 410, 140, "msg.payload"],
  winOpen: ["change", 1332, 459, 160, "Window Open", { italic: true }],
  winClosed: ["change", 1336, 506, 160, "Window Closed", { italic: true }],
  winTpl: ["uiTemplate", 1569, 481, 120, "template"],
  winDebug2: ["debug", 1625, 553, 140, "msg.payload", { on: true }],
  set2: ["change", 1332, 590, 160, "set msg.payload"],
  roomSwitch: ["switch", 463, 517, 100, "switch"],
  textInput: ["uiInput", 104, 577, 120, "text input"],
  conversation: ["watson", 261, 568, 140, "conversation"],
  talkDebug: ["debug", 258, 617, 140, "msg.payload"],
  setTalk: ["change", 438, 575, 160, "set msg.payload"],
  brace: ["template", 240, 692, 100, ""],
  roommate: ["uiText", 751, 537, 140, "Roommate:"],
  mateDebug: ["debug", 753, 586, 140, "msg.payload"],
  mainSwitch: ["switch", 854, 683, 100, "switch"],
  setWin: ["change", 944, 613, 160, "set msg.payload"],
  text2: ["uiText", 1770, 613, 100, "text"],
  text3: ["uiText", 1789, 655, 100, "text"],
  plus: ["uiButton", 996, 727, 100, "+"],
  minus: ["uiButton", 999, 786, 100, "-"],
  func: ["func", 1382, 763, 100, ""],
  funcDebug: ["debug", 1502, 692, 140, "msg.payload", { on: true }],
  text4: ["uiText", 1814, 757, 100, "text"],
  setTemp: ["change", 1625, 865, 160, "set msg.payload"],
  meeting: ["uiInput", 396, 937, 140, "Meeting ID"],
  conference: ["uiButton", 585, 937, 180, "Start Conference..."],
};

// [from, output, to]
const links = [
  ["iot", 0, "cases"],
  ["cases", 0, "light"],
  ["cases", 0, "temperature"],
  ["cases", 0, "humidity"],
  ["cases", 0, "room"],
  ["cases", 2, "setErr"],
  ["setErr", 0, "error"],
  ["light", 0, "lux"],
  ["light", 0, "lightSwitch"],
  ["lightSwitch", 0, "lightOn"],
  ["lightSwitch", 1, "lightOff"],
  ["lightOn", 0, "lightTpl"],
  ["lightOn", 0, "lightDebug"],
  ["lightOff", 0, "lightTpl"],
  ["lightOff", 0, "lightDebug"],
  ["lightOff", 0, "setTemp"],
  ["temperature", 0, "chart"],
  ["temperature", 0, "wave"],
  ["temperature", 0, "temp"],
  ["humidity", 0, "humDebug"],
  ["humidity", 0, "gauge"],
  ["roomSwitch", 0, "lightOff"],
  ["textInput", 0, "conversation"],
  ["textInput", 0, "talkDebug"],
  ["conversation", 0, "setTalk"],
  ["setTalk", 0, "roomSwitch"],
  ["setTalk", 0, "roommate"],
  ["setTalk", 0, "mateDebug"],
  ["setTalk", 0, "mainSwitch"],
  ["setTalk", 0, "brace"],
  ["brace", 0, "textInput"],
  ["mainSwitch", 0, "setWin"],
  ["mainSwitch", 0, "setTemp"],
  ["setWin", 0, "uiSwitch"],
  ["uiSwitch", 0, "winSwitch"],
  ["winSwitch", 0, "winOpen"],
  ["winSwitch", 0, "winDebug"],
  ["winSwitch", 1, "winClosed"],
  ["winOpen", 0, "winTpl"],
  ["winOpen", 0, "winDebug2"],
  ["winClosed", 0, "winTpl"],
  ["winClosed", 0, "winDebug2"],
  ["plus", 0, "func"],
  ["minus", 0, "func"],
  ["func", 0, "funcDebug"],
  ["func", 0, "text4"],
  ["setTemp", 0, "text4"],
];

function outputs(id) {
  const [type, , , , , opts = {}] = nodes[id];
  return opts.out || TYPES[type].out;
}

function outputY(id, i) {
  return (i - (outputs(id) - 1) / 2) * 13;
}

function linkPath([from, port, to]) {
  const x1 = nodes[from][1] + nodes[from][3];
  const y1 = nodes[from][2] + outputY(from, port);
  const x2 = nodes[to][1];
  const y2 = nodes[to][2];
  const dx = x2 - x1;
  const dy = y2 - y1;
  const delta = Math.hypot(dx, dy);
  let scale = 0.75;
  let scaleY = 0;
  if (delta < NODE_W) {
    scale = 0.75 - 0.75 * ((NODE_W - delta) / NODE_W);
  }
  if (dx < 0) {
    scale += 2 * (Math.min(5 * NODE_W, -dx) / (5 * NODE_W));
    if (Math.abs(dy) < 3 * NODE_H) {
      scaleY = (dy > 0 ? 0.5 : -0.5) * ((3 * NODE_H - Math.abs(dy)) / (3 * NODE_H)) * (Math.min(NODE_W, -dx) / NODE_W);
    }
  }
  const cx = NODE_W * scale;
  const cy = NODE_H * scaleY;
  return `<path class="link" d="M${x1} ${y1}C${x1 + cx} ${y1 + cy} ${x2 - cx} ${y2 - cy} ${x2} ${y2}"/>`;
}

function port(x, y) {
  return `<rect class="port" x="${x - 5}" y="${y - 5}" width="10" height="10" rx="3"/>`;
}

function nodeMarkup(id) {
  const [type, x, y, w, label, opts = {}] = nodes[id];
  const t = TYPES[type];
  const count = outputs(id);
  const h = Math.max(NODE_H, count * 15);
  const iconX = t.right ? w - 30 : 0;
  let out = `<g transform="translate(${x} ${y})">`;

  if (type === "debug") {
    const s = opts.on ? 0 : -8;
    out += `<rect class="frame" x="${w - 6 + s}" y="-13" width="32" height="26" rx="5" fill="${opts.on ? "#eee" : "#fff"}"/>`;
    out += `<rect class="knob" x="${w + 5 + s}" y="-9" width="16" height="18" rx="4" fill="${opts.on ? t.color : "#e4ebe2"}"/>`;
  }
  if (type === "inject") {
    out += `<rect class="frame" x="-25" y="-13" width="32" height="26" rx="5" fill="#eee"/>`;
    out += `<rect class="knob" x="-21" y="-9" width="16" height="18" rx="4" fill="${t.color}"/>`;
  }

  out += `<rect class="body" x="0" y="${-h / 2}" width="${w}" height="${h}" rx="5" fill="${t.color}"/>`;
  out += `<rect class="shade" x="${iconX}" y="${-h / 2}" width="30" height="${h}" rx="4"/>`;
  out += `<path class="edge" d="M${t.right ? iconX : 30} ${1 - h / 2}v${h - 2}"/>`;
  out += `<use href="#i-${t.icon}" x="${iconX + 1}" y="-13" width="28" height="28"/>`;
  if (label) {
    out += `<text class="label${opts.italic ? " italic" : ""}" x="${t.right ? w - 38 : 38}" y="4" text-anchor="${t.right ? "end" : "start"}">${label}</text>`;
  }

  if (t.in) out += port(0, 0);
  for (let i = 0; i < count; i++) out += port(w, outputY(id, i));
  if (opts.status) {
    out += `<rect x="8" y="18" width="12" height="12" rx="2" fill="#5a8"/>`;
    out += `<text class="status" x="24" y="27">${opts.status}</text>`;
  }
  return out + "</g>";
}

document.getElementById("flow").innerHTML =
  `<g transform="scale(${ZOOM})">` +
  links.map(linkPath).join("") +
  Object.keys(nodes).map(nodeMarkup).join("") +
  "</g>";
```
